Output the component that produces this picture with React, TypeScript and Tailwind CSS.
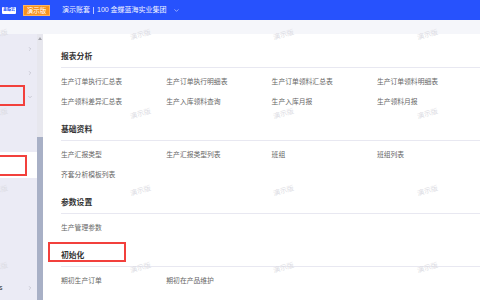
import {ChevronDown, ChevronRight} from "lucide-react";

const FONT = "[font-family:'Liberation_Sans','Noto_Sans_CJK_SC',sans-serif]";

interface Section {
    title: string;
    items: string[];
    marked?: boolean;
}

const sections: Section[] = [
    {
        title: "报表分析",
        items: [
            "生产订单执行汇总表", "生产订单执行明细表", "生产订单领料汇总表", "生产订单领料明细表",
            "生产领料差异汇总表", "生产入库领料查询", "生产入库月报", "生产领料月报",
        ],
    },
    {
        title: "基础资料",
        items: ["生产汇报类型", "生产汇报类型列表", "班组", "班组列表", "齐套分析模板列表"],
    },
    {
        title: "参数设置",
        items: ["生产管理参数"],
    },
    {
        title: "初始化",
        items: ["期初生产订单", "期初在产品维护"],
        marked: true,
    },
];

const markX = [-13, 130, 273, 417];
const markY = [31, 110, 187, 264];

function Watermarks() {
    return (
        <div className="pointer-events-none absolute inset-0 overflow-hidden">
            {markY.map((y) =>
                markX.map((x) => (
                    <span
                        key={`${x}-${y}`}
                        className="absolute -rotate-[15deg] text-[7px] leading-[8px] text-[#dcdce3] whitespace-nowrap"
                        style={{left: x, top: y}}
                    >
                        演示版
                    </span>
                ))
            )}
        </div>
    );
}

function Header() {
    return (
        <div className="flex h-[20px] items-center bg-[#2752fd] pl-[2px]">
            {/* logo */}
            <div className="flex h-[7px] w-[14px] items-center justify-center rounded-[1px] bg-white">
                <span className="text-[4px] leading-[4px] font-bold text-[#2752fd]">金蝶云</span>
            </div>
            {/* demo badge */}
            <div className="ml-[7px] flex h-[11px] w-[27px] items-center justify-center border border-[#ffb45e] bg-[#f7931e]">
                <span className="text-[6.5px] leading-[7px] text-white">演示版</span>
            </div>
            <div className="ml-[12px] flex items-center text-[7px] leading-[8px] text-[#eef1ff]">
                <span>演示账套</span>
                <span className="mx-[3px] h-[7px] w-px bg-[#b9c6ff]"/>
                <span>100 金蝶蓝海实业集团</span>
                <ChevronDown className="ml-[6px] text-[#dfe5ff]" size={7} strokeWidth={2}/>
            </div>
        </div>
    );
}

function Sidebar() {
    return (
        <div className="flex w-[37px] shrink-0 flex-col bg-[#ebebf5] pt-[3px]">
            <div className="flex h-[24px] items-center justify-end pr-[4px]">
                <ChevronRight size={6} strokeWidth={2} className="text-[#a9a9b4]"/>
            </div>
            <div className="flex h-[24px] items-center justify-end pr-[4px]">
                <ChevronRight size={6} strokeWidth={2} className="text-[#a9a9b4]"/>
            </div>
            <div className="relative flex h-[24px] items-center justify-end pr-[4px]">
                <div className="absolute left-[-3px] top-0 h-[21px] w-[28px] border-2 border-[#f2403c]"/>
                <ChevronDown size={6} strokeWidth={2} className="text-[#a9a9b4]"/>
            </div>
            <div className="h-[43px]"/>
            <div className="relative h-[26px] bg-white">
                <div className="absolute left-[-3px] top-[3px] h-[21px] w-[30px] border-2 border-[#f2403c]"/>
            </div>
            <div className="flex-1"/>
            <div className="flex h-[24px] items-center justify-between pr-[4px] text-[7px] leading-[8px] text-[#333]">
                <span className="-ml-[1px]">s</span>
                <ChevronRight size={6} strokeWidth={2} className="text-[#a9a9b4]"/>
            </div>
        </div>
    );
}

function Scrollbar() {
    return (
        <div className="flex w-[6px] shrink-0 flex-col bg-[#e7e7ee]">
            <div className="flex h-[8px] items-center justify-center">
                <div className="h-0 w-0 border-x-[2px] border-b-[3px] border-x-transparent border-b-[#a5a5ad]"/>
            </div>
            <div className="flex-1"/>
            <div className="h-[163px] bg-[#a8b0c6]"/>
        </div>
    );
}

function SectionBlock({section}: { section: Section }) {
    return (
        <div className="mb-[11px]">
            <div className="relative flex h-[14px] items-center">
                {section.marked ? (
                    <div className="absolute left-[-13px] top-[-7px] h-[20px] w-[78px] border-2 border-[#f2403c]"/>
                ) : null}
                <span className="text-[7.8px] leading-[10px] font-bold text-[#333]">{section.title}</span>
            </div>
            <div className="mt-[3px] h-px bg-[#e8e8f1]"/>
            <div className="mt-[4px] grid grid-cols-[105.3px_105.3px_105.3px_105.3px]">
                {section.items.map((item) => (
                    <div key={item} className="flex h-[20px] items-center whitespace-nowrap text-[6.8px] leading-[8px] text-[#666]">
                        {item}
                    </div>
                ))}
            </div>
        </div>
    );
}

export default function App() {
    return (
        <div className={`relative h-[300px] w-[480px] overflow-hidden bg-[#f5f6fa] ${FONT}`}>
            <Header/>
            <div className="mt-[14px] flex h-[266px]">
                <Sidebar/>
                <Scrollbar/>
                <div className="min-w-0 flex-1 overflow-hidden bg-white pl-[18px] pt-[16px]">
                    {sections.map((s) => (
                        <SectionBlock key={s.title} section={s}/>
                    ))}
                </div>
            </div>
            <Watermarks/>
        </div>
    );
}
